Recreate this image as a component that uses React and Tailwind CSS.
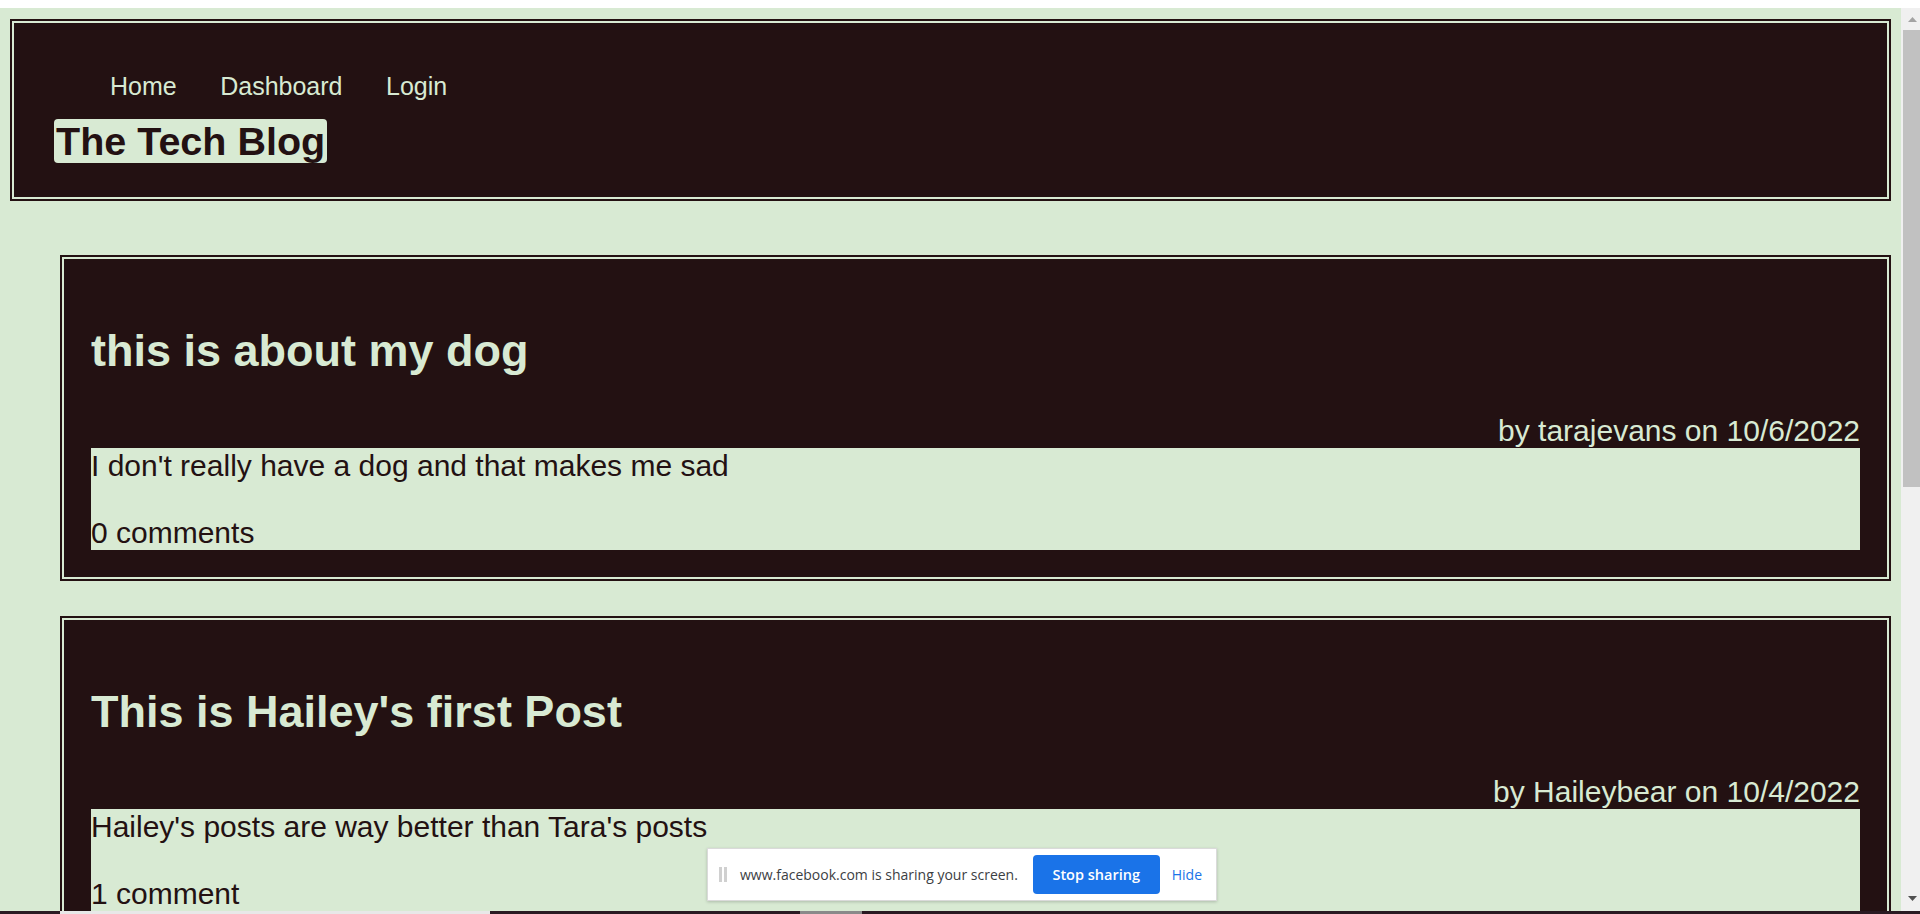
import React from "react";

const posts = [
  {
    title: "this is about my dog",
    by: "by tarajevans on 10/6/2022",
    body: "I don't really have a dog and that makes me sad",
    comments: "0 comments",
  },
  {
    title: "This is Hailey's first Post",
    by: "by Haileybear on 10/4/2022",
    body: "Hailey's posts are way better than Tara's posts",
    comments: "1 comment",
  },
];

function Post({ p, first }) {
  return (
    <section
      className={`${first ? "mt-[54px]" : "mt-[35px]"} ml-[50px] shrink-0 border-[6px] border-double border-[#231112] bg-[#231112] bg-clip-padding px-[25px] pt-[25px] pb-[25px]`}
    >
      <h2 className="mt-[39px] text-[45px] leading-[52px] font-bold text-[#d8ead3]">{p.title}</h2>
      <div className="mt-[36px] text-right text-[30px] leading-[35px] text-[#d8ead3]">{p.by}</div>
      <div className="bg-[#d8ead3] text-[30px] leading-[35px] text-[#231112]">
        <p>{p.body}</p>
        <p className="mt-[32px]">{p.comments}</p>
      </div>
    </section>
  );
}

export default function App() {
  return (
    <div className="flex h-[914px] w-[1920px] flex-col overflow-hidden bg-white font-['Liberation_Sans',Arial,sans-serif]">
      <div className="h-[8px] shrink-0 bg-white" />
      <div className="relative flex min-h-0 flex-1">
        <main className="flex min-w-0 flex-1 flex-col overflow-hidden bg-[#d8ead3] px-[10px] pt-[11px]">
          <header className="h-[182px] shrink-0 border-[6px] border-double border-[#231112] bg-[#231112] bg-clip-padding pt-[47px]">
            <nav className="flex gap-[43.5px] pl-[94px] text-[25px] leading-[28px] text-[#d8ead3]">
              <a>Home</a>
              <a>Dashboard</a>
              <a>Login</a>
            </nav>
            <h1 className="mt-[19px] ml-[38px] inline-block rounded-[4px] bg-[#d8ead3] px-[2px] text-[39.5px] leading-[44px] font-bold text-[#231112]">
              The Tech Blog
            </h1>
          </header>
          {posts.map((p, i) => (
            <Post key={i} p={p} first={i === 0} />
          ))}
        </main>
        <div className="flex w-[19px] shrink-0 flex-col bg-[#f0f0f0]">
          <div className="flex h-[22px] items-center justify-center pl-[3px]">
            <svg width="9" height="5" viewBox="0 0 9 5"><path d="M0 5 L4.5 0 L9 5 Z" fill="#a3a3a3" /></svg>
          </div>
          <div className="ml-[2px] h-[457px] bg-[#c1c1c1]" />
          <div className="flex-1" />
          <div className="flex h-[18px] items-start justify-center pl-[3px] pt-[3px]">
            <svg width="9" height="5" viewBox="0 0 9 5"><path d="M0 0 L9 0 L4.5 5 Z" fill="#505050" /></svg>
          </div>
        </div>
        <div className="absolute left-[707px] top-[840px] flex h-[53px] w-[510px] items-center border border-[#dadada] bg-white pl-[11px] pr-[14px] shadow-[0_1px_3px_rgba(0,0,0,0.2)] font-['Open_Sans','Noto_Sans',sans-serif]">
          <div className="flex h-[15px] gap-[2px]">
            <div className="w-[3px] bg-[#d0d0d0]" />
            <div className="w-[3px] bg-[#d0d0d0]" />
          </div>
          <span className="ml-[13px] text-[14px] text-[#3c4043]">www.facebook.com is sharing your screen.</span>
          <button className="ml-auto h-[39px] w-[127px] rounded-[4px] bg-[#1a73e8] text-[14.5px] font-semibold text-white">
            Stop sharing
          </button>
          <span className="ml-[12px] text-[14px] text-[#1a73e8]">Hide</span>
        </div>
      </div>
      <div className="flex h-[3px] shrink-0 bg-[#2a1a22]">
        <div className="w-[60px]" />
        <div className="w-[430px] bg-[#e8e8e8]" />
        <div className="w-[310px]" />
        <div className="w-[62px] bg-[#8a8a8a]" />
      </div>
    </div>
  );
}
